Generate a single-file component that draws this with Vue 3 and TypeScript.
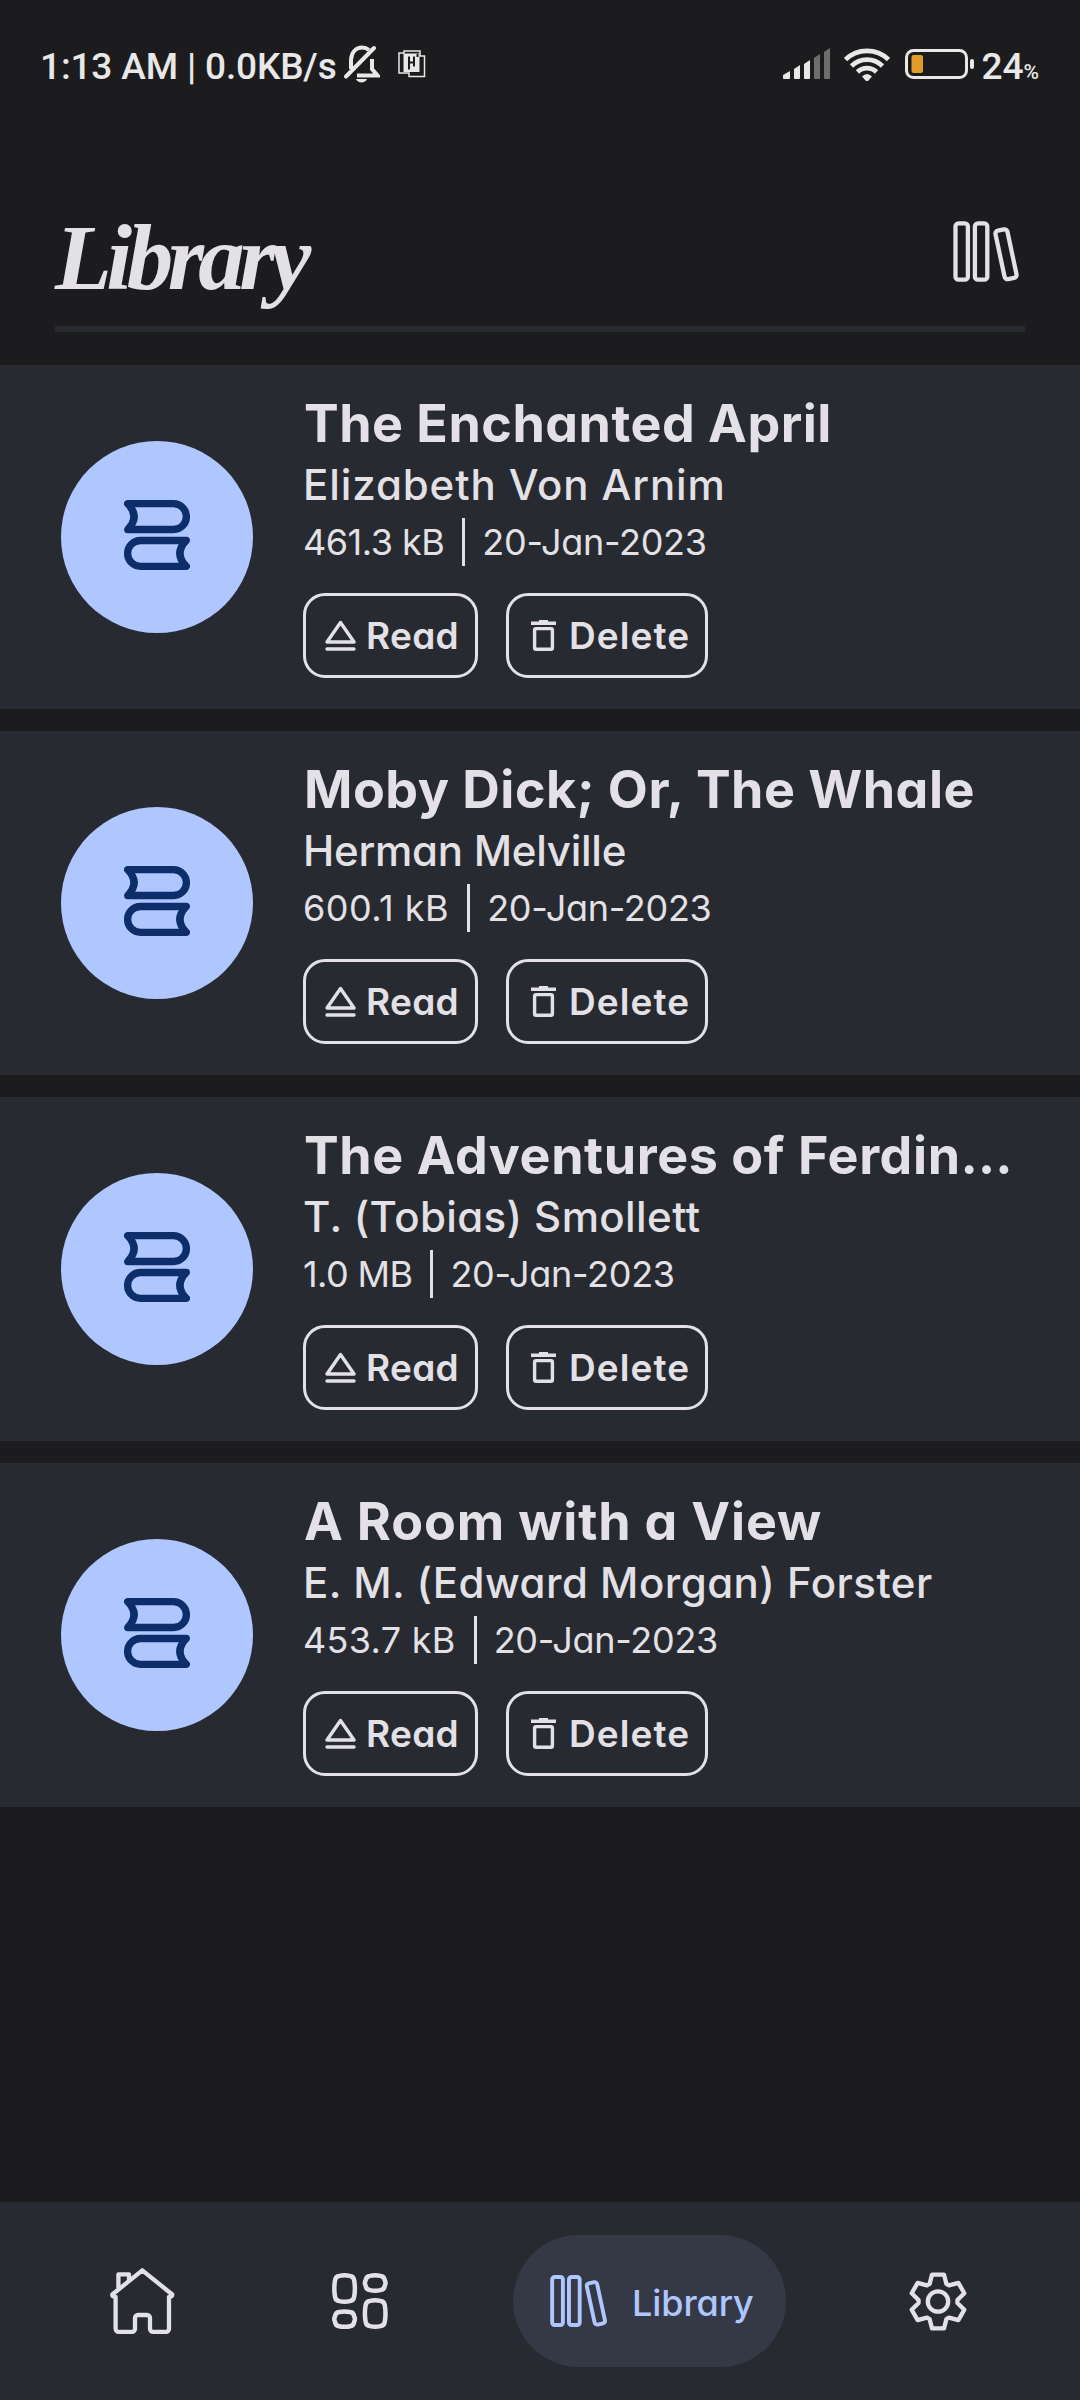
<script setup lang="ts">
interface Book {
  title: string
  author: string
  size: string
  date: string
  spacing: { title: number; author: number; size: number }
}

const books: Book[] = [
  { title: 'The Enchanted April', author: 'Elizabeth Von Arnim', size: '461.3 kB', date: '20-Jan-2023', spacing: { title: 0.5, author: 0.9, size: -0.5 } },
  { title: 'Moby Dick; Or, The Whale', author: 'Herman Melville', size: '600.1 kB', date: '20-Jan-2023', spacing: { title: 0.5, author: -0.25, size: 0.5 } },
  { title: 'The Adventures of Ferdin…', author: 'T. (Tobias) Smollett', size: '1.0 MB', date: '20-Jan-2023', spacing: { title: 0.58, author: 0.4, size: -0.6 } },
  { title: 'A Room with a View', author: 'E. M. (Edward Morgan) Forster', size: '453.7 kB', date: '20-Jan-2023', spacing: { title: 0.85, author: 0.48, size: 0.3 } },
]

// Rounded tile with slightly bulging sides
function tile(x: number, y: number, w: number, h: number): string {
  const r = x + w
  const b = y + h
  return `M${x + 5} ${y + 0.6}Q${x + w / 2} ${y - 0.6} ${r - 5} ${y + 0.6}Q${r - 1.3} ${y + 1} ${r - 0.7} ${y + 5}` +
    `Q${r + 0.7} ${y + h / 2} ${r - 0.7} ${b - 5}Q${r - 1.3} ${b - 1} ${r - 5} ${b - 0.6}` +
    `Q${x + w / 2} ${b + 0.6} ${x + 5} ${b - 0.6}Q${x + 1.3} ${b - 1} ${x + 0.7} ${b - 5}` +
    `Q${x - 0.7} ${y + h / 2} ${x + 0.7} ${y + 5}Q${x + 1.3} ${y + 1} ${x + 5} ${y + 0.6}z`
}
const tiles = [
  tile(2.3, 2.3, 20.6, 26.4),
  tile(32.9, 2.3, 20.6, 15.4),
  tile(2.3, 38.4, 20.6, 15.4),
  tile(32.9, 27.3, 20.6, 26.4),
].join('')

// Six teeth, each given by its two crown corners and the valley after it (angle, radius)
const gear = Array.from({ length: 6 }, (_, k) =>
  [[-12.5, 27.6], [12.5, 27.6], [25.5, 19.5], [34.5, 19.5]].map(([a, r]) => {
    const t = ((a + 60 * k) * Math.PI) / 180
    return `${(29 + r * Math.sin(t)).toFixed(2)},${(29.5 - r * Math.cos(t)).toFixed(2)}`
  }).join(' '),
).join(' ')
</script>

<template>
  <div class="screen">
    <header class="status">
      <span class="clock">1:13 AM | 0.0KB/s</span>
      <svg class="bell" width="36" height="38" viewBox="0 0 36 38" fill="none">
        <path d="M7 24V15C7.500 7 12 2.500 18 2.500c2.500 0 5 .8 7 2.500M28 14v10l5.500 6.500H13" stroke="#e8e8e8" stroke-width="4" />
        <path d="M2 31.500 30 3" stroke="#e8e8e8" stroke-width="4" stroke-linecap="round" />
        <path d="M12 34h11c-1.500 4.500-9.500 4.500-11 0z" fill="#e8e8e8" />
      </svg>
      <svg class="dup" width="28" height="28" viewBox="0 0 28 28" fill="none">
        <path d="M6 3H1v20h10v3.500h15.500V6H22V1H6z" stroke="#e8e8e8" stroke-width="1.500" />
        <path d="M5.500 3.500h16V22H5.500z" fill="#e8e8e8" />
        <path d="M11 6.500v13M16 6.500v10M11 12.500h5M19.500 4v3" stroke="#1c1c1e" stroke-width="2" />
      </svg>
      <svg class="signal" width="48" height="32" viewBox="0 0 48 32" fill="#e8e8e8">
        <path d="M0 27l7-4v7a1 1 0 0 1-1 1H1a1 1 0 0 1-1-1zM11 21l6-4v13a1 1 0 0 1-1 1h-4a1 1 0 0 1-1-1zM21 16l6-4v18a1 1 0 0 1-1 1h-4a1 1 0 0 1-1-1z" />
        <path fill="#6e6e6f" d="M31 10l6-4v24a1 1 0 0 1-1 1h-4a1 1 0 0 1-1-1zM41 4l6-4v30a1 1 0 0 1-1 1h-4a1 1 0 0 1-1-1z" />
      </svg>
      <svg class="wifi" width="46" height="34" viewBox="0 0 46 34" fill="none" stroke="#e8e8e8" stroke-width="4.700">
        <path d="M1.500 12.500a31 31 0 0 1 43 0M7.500 19a22 22 0 0 1 31 0M13.500 25a13.500 13.500 0 0 1 19 0" />
        <path d="M18 29.500q5-5 10 0l-3.500 4q-1.500 1-3 0z" fill="#e8e8e8" stroke="none" />
      </svg>
      <svg class="battery" width="69" height="30" viewBox="0 0 69 30" fill="none">
        <rect x="1.500" y="1.500" width="60" height="27" rx="7" stroke="#e8e8e8" stroke-width="3" />
        <rect x="6.500" y="6" width="11.500" height="18" rx="2" fill="#e09c27" />
        <rect x="65" y="10" width="4" height="10" rx="2" fill="#e8e8e8" />
      </svg>
      <span class="level">24<small>%</small></span>
    </header>

    <div class="heading">
      <h1>Library</h1>
      <svg class="shelf" width="68" height="62" viewBox="0 0 68 62" fill="none" stroke="#e3e1e6" stroke-width="4.300">
        <rect x="2.500" y="2.300" width="12.400" height="56.400" rx="3" />
        <rect x="21.900" y="2.300" width="12.400" height="56.400" rx="3" />
        <rect x="46.900" y="8.500" width="12.200" height="49.500" rx="3" transform="rotate(-12 53 33.200)" />
      </svg>
    </div>

    <main class="books">
      <article v-for="b in books" :key="b.title" class="card">
        <div class="cover">
          <svg width="66" height="70" viewBox="0 0 66 70" fill="none" stroke="#0d2d6b" stroke-width="7.300" stroke-linejoin="round">
            <path d="M3.700 3.700H49.500a12.900 12.900 0 0 1 0 25.800H3.700Q16.500 16.600 3.700 3.700z" />
            <path d="M62.300 66.300H16.500a12.900 12.900 0 0 1 0-25.800H62.300Q49.500 53.400 62.300 66.300z" />
          </svg>
        </div>
        <div class="info">
          <h2 :style="{ letterSpacing: b.spacing.title + 'px' }">{{ b.title }}</h2>
          <p class="author" :style="{ letterSpacing: b.spacing.author + 'px' }">{{ b.author }}</p>
          <p class="meta">
            <span :style="{ letterSpacing: b.spacing.size + 'px' }">{{ b.size }}</span>
            <i></i>
            <span class="date">{{ b.date }}</span>
          </p>
          <div class="actions">
            <button class="read">
              <svg width="31" height="31" viewBox="0 0 31 31" fill="none" stroke="#e3e1e6" stroke-width="3.400" stroke-linejoin="round" stroke-linecap="round">
                <path d="M15.500 2.500 29 22H2zM2 29h27" />
              </svg>
              <span>Read</span>
            </button>
            <button class="delete">
              <svg width="25" height="31" viewBox="0 0 25 31" fill="none" stroke="#e3e1e6" stroke-width="3.400">
                <path d="M0 3.300h25M8 1.700h9" />
                <rect x="3.600" y="8.600" width="17.800" height="20.600" rx="1.500" />
              </svg>
              <span>Delete</span>
            </button>
          </div>
        </div>
      </article>
    </main>

    <nav class="nav">
      <svg class="home" width="65" height="66" viewBox="0 0 65 66" fill="none" stroke="#e3e1e6" stroke-width="4.300" stroke-linejoin="round">
        <path d="M32.300 2.300 62.300 26.500Q62.500 29 59 29V60.800a3 3 0 0 1-3 3H43a3 3 0 0 1-3-3V50a3 3 0 0 0-3-3H28a3 3 0 0 0-3 3v10.800a3 3 0 0 1-3 3H8.600a3 3 0 0 1-3-3V29Q2 29 2.300 26.500z" />
        <path d="M8.400 20V6.300H19V12" />
      </svg>
      <svg class="tiles" width="56" height="56" viewBox="0 0 56 56" fill="none" stroke="#e3e1e6" stroke-width="4.500">
        <path :d="tiles" />
      </svg>
      <div class="active">
        <svg width="58" height="52" viewBox="0 0 67 61" preserveAspectRatio="none" fill="none" stroke="#b0c6ff" stroke-width="4.500">
          <rect x="2.500" y="2.300" width="12.400" height="56.400" rx="3" />
          <rect x="21.900" y="2.300" width="12.400" height="56.400" rx="3" />
          <rect x="46.900" y="8.500" width="12.200" height="49.500" rx="3" transform="rotate(-12 53 33.200)" />
        </svg>
        <span>Library</span>
      </div>
      <svg class="gear" width="58" height="59" viewBox="0 0 58 59" fill="none" stroke="#e3e1e6" stroke-width="4.300" stroke-linejoin="round">
        <polygon :points="gear" />
        <circle cx="29" cy="29.500" r="10.200" />
      </svg>
    </nav>
  </div>
</template>

<style>
body {
  margin: 0;
  background: #1c1c1e;
}
</style>

<style scoped>
.screen {
  width: 1080px;
  height: 2400px;
  background: #1c1c1e;
  color: #e3e1e6;
  font-family: Inter, sans-serif;
  font-feature-settings: "cv11";
  display: flex;
  flex-direction: column;
  overflow: hidden;
}
svg {
  display: block;
  flex: none;
}
h1, h2, p {
  margin: 0;
  font-weight: 400;
  white-space: nowrap;
}
.status {
  box-sizing: border-box;
  height: 110px;
  padding: 22px 41px 0 40px;
  display: flex;
  align-items: center;
  font: 500 37px Roboto, sans-serif;
  color: #e8e8e8;
}
.status svg {
  margin-bottom: 4px;
}
.clock {
  width: 304px;
  white-space: nowrap;
  letter-spacing: -0.15px;
}
.dup {
  margin-left: 18px;
}
.signal {
  margin-left: auto;
}
.wifi {
  margin-left: 13px;
}
.battery {
  margin-left: 15px;
}
.level {
  margin-left: 7px;
}
.level small {
  font-size: 21px;
}
.heading {
  display: flex;
  justify-content: space-between;
  height: 124px;
  margin: 92px 55px 33px;
  border-bottom: 6px solid #272a31;
}
h1 {
  font: italic 700 93px/111px "Liberation Serif", serif;
  letter-spacing: -5.5px;
}
.shelf {
  margin: 19px 4px 0 0;
}
.books {
  display: flex;
  flex-direction: column;
  gap: 22px;
}
.card {
  height: 344px;
  background: #272a31;
  display: flex;
}
.cover {
  width: 192px;
  height: 192px;
  margin: 76px 50px 0 61px;
  border-radius: 50%;
  background: #b0c6ff;
  display: flex;
  align-items: center;
  justify-content: center;
}
.cover svg {
  margin-bottom: 4px;
}
.info {
  padding-top: 29px;
}
h2 {
  font-size: 52px;
  line-height: 60px;
  font-weight: 700;
  padding-left: 1px;
}
.author {
  font-size: 42px;
  line-height: 61px;
  font-weight: 500;
}
.meta {
  font-size: 36px;
  line-height: 54px;
  display: flex;
  align-items: center;
}
.meta i {
  width: 3px;
  height: 48px;
  background: #e3e1e6;
  margin: 0 17px 0 18px;
}
.date {
  letter-spacing: -0.3px;
}
.actions {
  display: flex;
  gap: 28px;
  margin-top: 24px;
}
button {
  box-sizing: border-box;
  height: 85px;
  padding: 0 0 0 19px;
  border: 3px solid #e3e1e6;
  border-radius: 22px;
  background: none;
  color: inherit;
  font: 600 37px Inter, sans-serif;
  font-feature-settings: "cv11";
  display: flex;
  align-items: center;
}
.read {
  width: 175px;
}
.read span {
  margin-left: 10px;
  letter-spacing: 0.3px;
}
.delete {
  width: 202px;
  padding-left: 22px;
}
.delete span {
  margin-left: 13px;
  letter-spacing: 1.1px;
}
.nav {
  margin-top: auto;
  height: 198px;
  box-sizing: border-box;
  padding-left: 110px;
  background: #272a31;
  display: flex;
  align-items: center;
}
.tiles {
  margin-left: 157px;
}
.active {
  box-sizing: border-box;
  width: 273px;
  height: 132px;
  margin: 0 123px 0 125px;
  padding-left: 37px;
  border-radius: 66px;
  background: #353946;
  display: flex;
  align-items: center;
  gap: 24px;
}
.active span {
  padding-top: 3px;
  font-size: 36px;
  font-weight: 500;
  letter-spacing: -0.1px;
  color: #b0c6ff;
}
</style>
